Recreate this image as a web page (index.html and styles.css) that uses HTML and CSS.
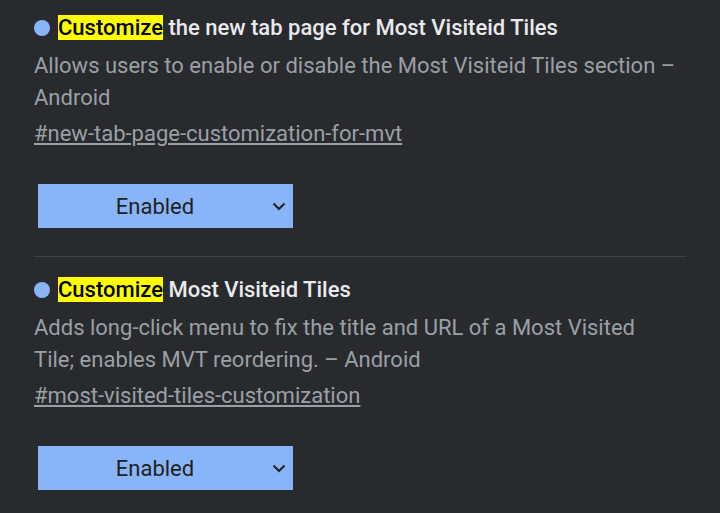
FILE: index.html
```html
<!DOCTYPE html>
<html>
<head>
<meta charset="utf-8">
<link rel="stylesheet" href="styles.css">
</head>
<body>
<div class="list">
  <div class="flag">
    <div class="title-row">
      <span class="dot"></span>
      <h2 class="title"><mark class="hl">Customize</mark> the new tab page for Most Visiteid Tiles</h2>
    </div>
    <p class="desc">Allows users to enable or disable the Most Visiteid Tiles section – Android</p>
    <a class="link" href="#">#new-tab-page-customization-for-mvt</a>
    <div class="select">
      <span class="select-text">Enabled</span>
      <svg class="chev" width="14" height="9" viewBox="0 0 14 9"><path d="M1.5 1.5 L7 7 L12.5 1.5" fill="none" stroke="#202124" stroke-width="2"/></svg>
    </div>
  </div>
  <div class="flag">
    <div class="title-row">
      <span class="dot"></span>
      <h2 class="title"><mark class="hl">Customize</mark> Most Visiteid Tiles</h2>
    </div>
    <p class="desc">Adds long-click menu to fix the title and URL of a Most Visited Tile; enables MVT reordering. – Android</p>
    <a class="link" href="#">#most-visited-tiles-customization</a>
    <div class="select">
      <span class="select-text">Enabled</span>
      <svg class="chev" width="14" height="9" viewBox="0 0 14 9"><path d="M1.5 1.5 L7 7 L12.5 1.5" fill="none" stroke="#202124" stroke-width="2"/></svg>
    </div>
  </div>
</div>
</body>
</html>
```
FILE: styles.css
```css
html, body {
  margin: 0;
  padding: 0;
  background: #292a2d;
  font-family: Roboto, "Liberation Sans", sans-serif;
  overflow: hidden;
}
.list {
  padding: 15px 34px 0 34px;
}
.flag {
  display: flex;
  flex-direction: column;
  align-items: flex-start;
  padding-bottom: 28px;
  border-bottom: 1px solid #3c4043;
  margin-bottom: 20px;
}
.title-row {
  display: flex;
  align-items: center;
  height: 26px;
}
.dot {
  width: 16px;
  height: 16px;
  border-radius: 50%;
  background: #8ab4f8;
  margin-right: 8px;
  flex: none;
}
.title {
  margin: 0;
  font-size: 22px;
  font-weight: 500;
  color: #e8eaed;
  line-height: 26px;
  white-space: nowrap;
}
.hl {
  background: #ffff00;
  color: #000;
  padding: 0;
}
.desc {
  margin: 9px 0 0 0;
  max-width: 643px;
  font-size: 22px;
  line-height: 32px;
  color: #9aa0a6;
}
.link {
  margin-top: 4px;
  font-size: 22px;
  line-height: 32px;
  color: #9aa0a6;
  text-decoration: underline;
}
.select {
  margin-top: 34px;
  margin-left: 4px;
  width: 255px;
  height: 44px;
  background: #8ab4f8;
  display: flex;
  align-items: center;
  position: relative;
  box-sizing: border-box;
  padding-right: 21px;
}
.select-text {
  flex: 1;
  text-align: center;
  font-size: 22px;
  color: #202124;
}
.chev {
  position: absolute;
  right: 7px;
  top: 18px;
}
```
